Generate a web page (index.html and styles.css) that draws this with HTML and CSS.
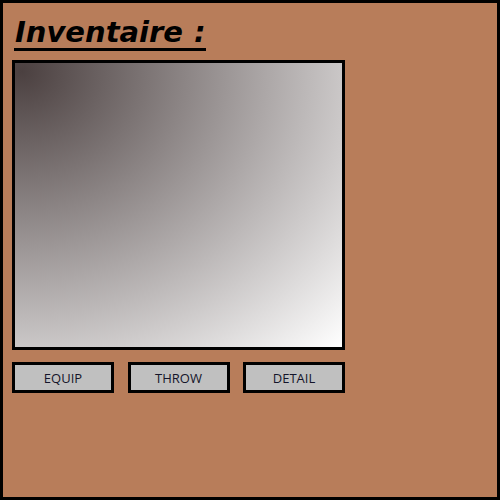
FILE: index.html
```html
<!DOCTYPE html>
<html lang="fr">
<head>
  <meta charset="UTF-8" />
  <title>Inventaire</title>
  <link rel="stylesheet" href="styles.css">
</head>
<body>
  <div class="frame">
    <h1 class="title">Inventaire :</h1>

    <div class="preview"></div>

    <div class="actions">
      <button class="btn">EQUIP</button>
      <button class="btn">THROW</button>
      <button class="btn">DETAIL</button>
    </div>
  </div>
</body>
</html>
```

FILE: styles.css
```css
* {
  box-sizing: border-box;
  margin: 0;
  padding: 0;
}

body {
  background: #b87d5a;
}

.frame {
  width: 500px;
  height: 500px;
  border: 3px solid #000;
  background: #b87d5a;
  padding: 14px 9px;
}

.title {
  display: inline-block;
  font-family: "DejaVu Sans", sans-serif;
  font-style: italic;
  font-weight: bold;
  font-size: 29px;
  line-height: 30px;
  word-spacing: 1px;
  color: #000;
  margin-left: 2px;
  padding-left: 1px;
  padding-right: 0;
  border-bottom: 3px solid #000;
  height: 34px;
  margin-bottom: 9px;
}

.preview {
  width: 333px;
  height: 290px;
  border: 3px solid #000;
  background: radial-gradient(ellipse farthest-corner at 2% 3%, #4b4040 0%, #9c9696 45%, #ffffff 100%);
}

.actions {
  display: flex;
  justify-content: space-between;
  margin-top: 12px;
  width: 333px;
}

.btn {
  width: 102px;
  height: 31px;
  border: 3px solid #000;
  background: #c0c0c0;
  font-family: "Open Sans", sans-serif;
  font-size: 13px;
  color: #14142a;
}
```
